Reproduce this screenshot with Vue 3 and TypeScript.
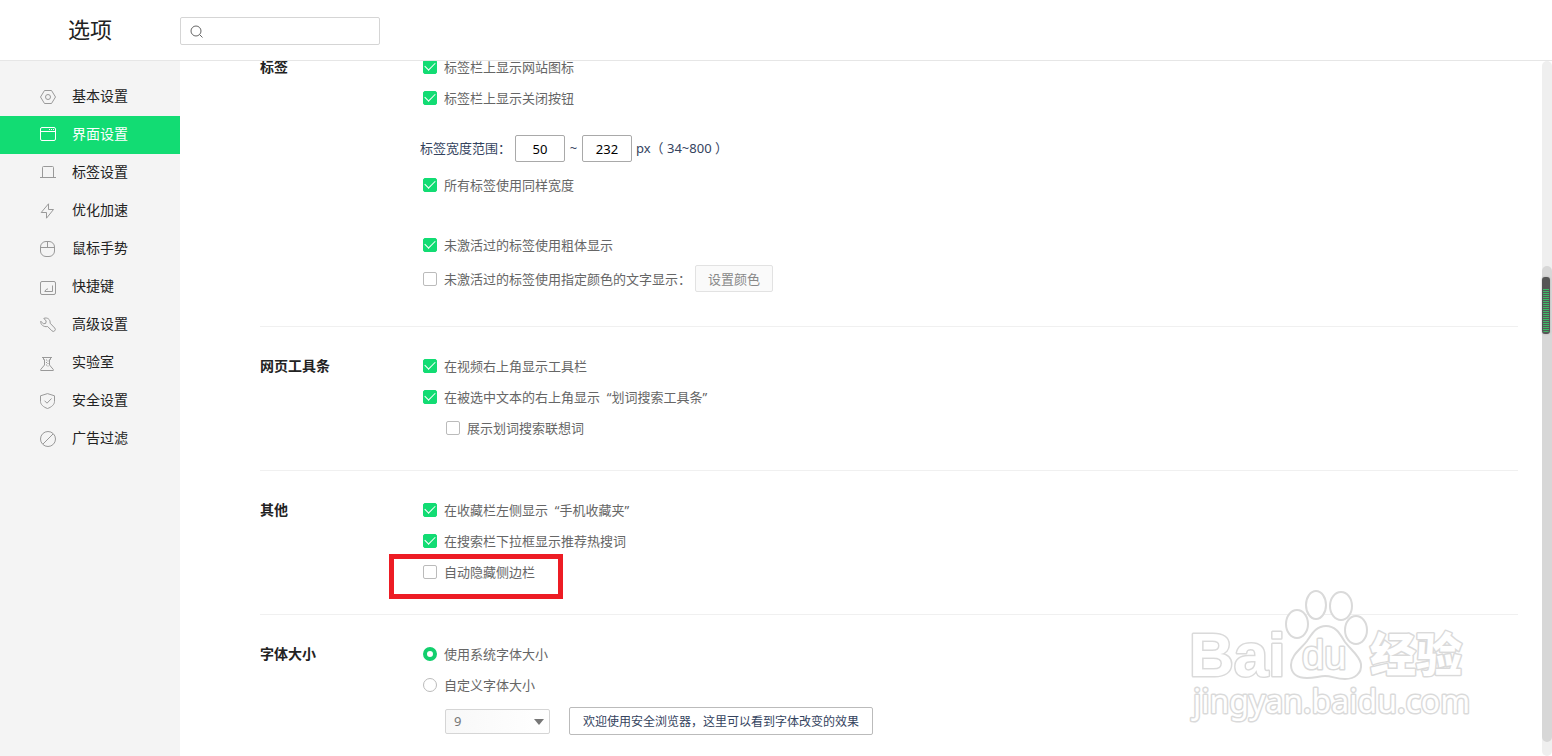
<script setup lang="ts">
import { ref } from 'vue'

interface NavItem {
  label: string
  paths: string[]
}

interface Option {
  label: string
  checked: boolean
  nested?: boolean
  marked?: boolean
}

const navItems: NavItem[] = [
  { label: '基本设置', paths: ['M4.5 1.5h7L15.5 8l-4 6.5h-7L.5 8z', 'M8 5.5a2.5 2.5 0 1 0 0 5a2.5 2.5 0 1 0 0-5z'] },
  { label: '界面设置', paths: ['M2 .5h12a1.5 1.5 0 0 1 1.5 1.5v10a1.5 1.5 0 0 1-1.5 1.5H2A1.5 1.5 0 0 1 .5 12V2A1.5 1.5 0 0 1 2 .5z', 'M.5 4.5h15', 'M9 2.5h1M11 2.5h1M13 2.5h1'] },
  { label: '标签设置', paths: ['M0 12.5h16', 'M2.5 12.5v-10a1 1 0 0 1 1-1h9a1 1 0 0 1 1 1v10'] },
  { label: '优化加速', paths: ['M8.5 .8L1.2 9.5h5.3v5.7L13.5 6.5H8.5z'] },
  { label: '鼠标手势', paths: ['M6 .5h3a5.5 5.5 0 0 1 5.5 5.5v4a5.5 5.5 0 0 1-5.5 5.5H6A5.5 5.5 0 0 1 .5 10V6A5.5 5.5 0 0 1 6 .5z', 'M.5 6.5h14', 'M7.5 .5v6'] },
  { label: '快捷键', paths: ['M2 2.5h12a1.5 1.5 0 0 1 1.5 1.5v10a1.5 1.5 0 0 1-1.5 1.5H2A1.5 1.5 0 0 1 .5 14V4A1.5 1.5 0 0 1 2 2.5z', 'M12.5 6.5v6H5', 'M8 10H6.8L4.5 12.5'] },
  { label: '高级设置', paths: ['M3.8 1.4C7.2 0 10.6 2.4 10.1 6.2l4.6 4.8a1.9 1.9 0 0 1-2.8 2.8L7.6 9.5C3.6 10.4 .2 7.400 .8 4.200l2.600 2.600 2.300-.4.500-2.400z'] },
  { label: '实验室', paths: ['M2 2.5h10', 'M3.5 2.5v2h1V10L.7 14.5v1h12.6v-1L9.5 10V4.5h1v-2', 'M6 5h1M6 7.5h1M6 10h1M7.5 6h1M7.5 8.5h1M7.5 11h1'] },
  { label: '安全设置', paths: ['M7.5 .6L14.5 2.8V8.5C14.5 11.5 11.5 14.2 7.5 15.5C3.5 14.2 .5 11.5 .5 8.5V2.8z', 'M4.5 7.7l2.5 2.5 4.5-4.7'] },
  { label: '广告过滤', paths: ['M8 .5a7.5 7.5 0 1 0 0 15a7.5 7.5 0 1 0 0-15z', 'M13 3L3 13'] },
]

const active = ref(1)
const search = ref('')
const minWidth = ref('50')
const maxWidth = ref('232')
const fontMode = ref('system')
const fontSize = ref('9')

const tabOptions = ref<Option[]>([
  { label: '标签栏上显示网站图标', checked: true },
  { label: '标签栏上显示关闭按钮', checked: true },
])
const sameWidth = ref(true)
const boldUnread = ref(true)
const colorUnread = ref(false)

const groups = ref<{ title: string; options: Option[] }[]>([
  {
    title: '网页工具条',
    options: [
      { label: '在视频右上角显示工具栏', checked: true },
      { label: '在被选中文本的右上角显示\u00a0\u00a0“划词搜索工具条”', checked: true },
      { label: '展示划词搜索联想词', checked: false, nested: true },
    ],
  },
  {
    title: '其他',
    options: [
      { label: '在收藏栏左侧显示\u00a0\u00a0“手机收藏夹”', checked: true },
      { label: '在搜索栏下拉框显示推荐热搜词', checked: true },
      { label: '自动隐藏侧边栏', checked: false, marked: true },
    ],
  },
])
</script>

<template>
  <div class="page">
    <header class="header">
      <h1>选项</h1>
      <label class="search">
        <svg width="13" height="13" viewBox="0 0 13 13" aria-hidden="true">
          <circle cx="6" cy="6" r="5" />
          <path d="M9.500 9.500l3 3" />
        </svg>
        <input v-model="search" type="text" aria-label="搜索" />
      </label>
    </header>

    <div class="body">
      <nav class="sidebar">
        <a
          v-for="(item, i) in navItems"
          :key="item.label"
          href="#"
          :class="{ active: i === active }"
          @click.prevent="active = i"
        >
          <svg width="16" height="16" viewBox="0 0 16 16" aria-hidden="true">
            <path v-for="d in item.paths" :key="d" :d="d" />
          </svg>
          <span>{{ item.label }}</span>
        </a>
      </nav>

      <main class="main">
        <div class="content">
          <section class="first">
            <h2>标签</h2>
            <div class="controls">
              <label v-for="o in tabOptions" :key="o.label" class="row">
                <input v-model="o.checked" type="checkbox" />{{ o.label }}
              </label>
              <div class="range">
                <label for="min-width">标签宽度范围：</label>
                <input id="min-width" v-model="minWidth" type="text" />
                <span class="tilde">~</span>
                <input v-model="maxWidth" type="text" aria-label="最大宽度" />
                <span class="unit">px（ 34~800 ）</span>
              </div>
              <label class="row"><input v-model="sameWidth" type="checkbox" />所有标签使用同样宽度</label>
              <label class="row spaced"><input v-model="boldUnread" type="checkbox" />未激活过的标签使用粗体显示</label>
              <div class="color-row">
                <label class="row"><input v-model="colorUnread" type="checkbox" />未激活过的标签使用指定颜色的文字显示：</label>
                <button type="button">设置颜色</button>
              </div>
            </div>
          </section>

          <section v-for="g in groups" :key="g.title">
            <h2>{{ g.title }}</h2>
            <div class="controls">
              <label v-for="o in g.options" :key="o.label" class="row" :class="{ nested: o.nested, marked: o.marked }">
                <input v-model="o.checked" type="checkbox" />{{ o.label }}
              </label>
            </div>
          </section>

          <section>
            <h2>字体大小</h2>
            <div class="controls">
              <label class="row"><input v-model="fontMode" type="radio" name="font" value="system" />使用系统字体大小</label>
              <label class="row"><input v-model="fontMode" type="radio" name="font" value="custom" />自定义字体大小</label>
              <div class="font-row">
                <div class="select">
                  <select v-model="fontSize" aria-label="字体大小" :disabled="fontMode === 'system'">
                    <option>9</option>
                    <option>10</option>
                    <option>12</option>
                  </select>
                </div>
                <div class="sample">欢迎使用安全浏览器，这里可以看到字体改变的效果</div>
              </div>
            </div>
          </section>
        </div>
      </main>

      <div class="scrollbar" aria-hidden="true">
        <div class="thumb"></div>
        <div class="meter"></div>
      </div>
    </div>

    <svg class="watermark" width="300" height="150" viewBox="0 0 300 150" aria-hidden="true">
      <ellipse cx="113" cy="42" rx="11" ry="14" />
      <ellipse cx="132" cy="23" rx="10" ry="14" />
      <ellipse cx="157" cy="24" rx="11" ry="14" />
      <ellipse cx="172" cy="48" rx="11" ry="14" />
      <path d="M142 44C132 44 128 52 123 59C117 67 107 73 107 83C107 92 114 96 123 96C131 96 135 94 141 94C148 94 152 97 161 97C171 97 178 91 177 82C176 74 167 68 161 60C156 52 152 44 142 44Z" />
      <text class="latin" x="5" y="94">Bai</text>
      <text class="du" x="118" y="87">du</text>
      <text class="cjk" x="186" y="89">经验</text>
      <text class="site" x="9" y="131">jingyan.baidu.com</text>
    </svg>
  </div>
</template>

<style>
html,
body,
#app {
  height: 100%;
}
body {
  margin: 0;
  overflow: hidden;
}
</style>

<style scoped>
*,
*::before,
*::after {
  box-sizing: border-box;
}
.page {
  display: flex;
  flex-direction: column;
  height: 100%;
  position: relative;
  background: #fff;
  color: #222;
  font-family: "Noto Sans", "Noto Sans CJK SC", sans-serif;
  font-size: 13px;
}
input,
button,
select {
  font: inherit;
  margin: 0;
}
.header {
  display: flex;
  align-items: center;
  flex: none;
  height: 61px;
  border-bottom: 1px solid #e6e6e6;
}
h1 {
  width: 180px;
  margin: 0;
  padding: 0 0 2px 68px;
  font-size: 22px;
  font-weight: 400;
  line-height: 30px;
}
.search {
  display: flex;
  align-items: center;
  width: 200px;
  height: 28px;
  margin-top: 2px;
  padding: 0 9px;
  gap: 6px;
  border: 1px solid #d5d5d5;
  border-radius: 2px;
}
.search svg {
  flex: none;
  fill: none;
  stroke: #666;
}
.search input {
  flex: 1;
  min-width: 0;
  border: 0;
  outline: 0;
  background: none;
}
.body {
  display: flex;
  flex: 1;
  min-height: 0;
}
.sidebar {
  flex: none;
  width: 180px;
  padding-top: 17px;
  background: #f4f4f4;
}
.sidebar a {
  display: flex;
  align-items: center;
  gap: 16px;
  height: 38px;
  padding-left: 40px;
  color: #222;
  font-size: 14px;
  text-decoration: none;
}
.sidebar span {
  align-self: flex-start;
  line-height: 36px;
}
.sidebar svg {
  fill: none;
  stroke: #999;
}
.sidebar .active {
  background: #12dc73;
  color: #fff;
}
.sidebar .active svg {
  stroke: #fff;
}
.main {
  flex: 1;
  min-width: 0;
  overflow: hidden;
  padding: 0 24px 0 80px;
}
.content {
  margin-top: -10px;
}
section {
  display: flex;
  padding: 23px 0 27px;
  border-top: 1px solid #f0f0f0;
}
.first {
  padding: 0 0 32px;
  border-top: 0;
}
h2 {
  flex: none;
  width: 160px;
  margin: 0;
  font-size: 14px;
  font-weight: 700;
  line-height: 31px;
}
.controls {
  flex: 1;
  min-width: 0;
}
.row {
  display: flex;
  align-items: center;
  width: fit-content;
  height: 31px;
  padding-left: 3px;
  color: #666;
}
.nested {
  margin-left: 23px;
}
.spaced {
  margin-top: 29px;
}
.marked {
  position: relative;
}
.marked::after {
  content: "";
  position: absolute;
  top: -2px;
  left: -31px;
  width: 174px;
  height: 45px;
  border: 5px solid #ed1c24;
}
input[type="checkbox"],
input[type="radio"] {
  appearance: none;
  display: grid;
  place-items: center;
  flex: none;
  width: 14px;
  height: 14px;
  margin-right: 7px;
  border: 1px solid #bbb;
  border-radius: 2px;
  background: #fff;
}
input[type="checkbox"]:checked {
  border-color: #12dc73;
  background: #12dc73;
}
input[type="checkbox"]:checked::before {
  content: "";
  width: 10px;
  height: 6px;
  margin-bottom: 3px;
  border: solid #fff;
  border-width: 0 0 1px 1px;
  transform: rotate(-45deg);
}
input[type="radio"] {
  border-radius: 50%;
}
input[type="radio"]:checked {
  border: 4px solid #12cf6d;
}
.range {
  display: flex;
  align-items: center;
  height: 31px;
  margin: 20px 0 5px;
  color: #34435e;
}
.range label {
  width: 95px;
}
.range label,
.range span {
  padding-bottom: 2px;
}
.range input {
  width: 50px;
  height: 27px;
  padding: 0;
  border: 1px solid #a9a9a9;
  border-radius: 2px;
  color: #000;
  text-align: center;
}
.tilde {
  width: 17px;
  text-align: center;
}
.unit {
  padding-left: 4px;
}
.color-row {
  display: flex;
  align-items: center;
  margin-top: 3px;
}
button {
  width: 78px;
  height: 27px;
  margin-left: 4px;
  padding: 0;
  border: 1px solid #e2e2e2;
  border-radius: 2px;
  background: #fafafa;
  color: #888;
}
.font-row {
  display: flex;
  align-items: center;
  gap: 19px;
  margin: 7px 0 0 25px;
}
.select {
  position: relative;
}
.select::after {
  content: "";
  position: absolute;
  top: 10px;
  right: 6px;
  border: 5px solid transparent;
  border-top: 6px solid #777;
  border-bottom: 0;
}
select {
  appearance: none;
  width: 105px;
  height: 25px;
  padding: 0 8px;
  border: 1px solid #d5d5d5;
  border-radius: 2px;
  background: linear-gradient(90deg, #f8f8f8, #fff);
  color: #777;
  opacity: 1;
}
.sample {
  height: 28px;
  padding: 1px 13px 0;
  border: 1px solid #bbb;
  border-radius: 2px;
  color: #34435e;
  font-size: 12px;
  line-height: 26px;
  white-space: nowrap;
}
.scrollbar {
  position: relative;
  flex: none;
  width: 10px;
  border-radius: 5px;
  background: #efefef;
}
.thumb {
  position: absolute;
  top: 29.5%;
  bottom: 2%;
  width: 10px;
  border-radius: 5px;
  background: #d7d7d7;
}
.meter {
  position: absolute;
  top: 31%;
  width: 8px;
  height: 57px;
  margin-top: 1px;
  border: solid #555;
  border-width: 12px 1px 2px;
  border-radius: 3px;
  background: repeating-linear-gradient(#3dba66 0 1px, #555 1px 2px);
  box-shadow: 0 0 2px #aaa;
}
.watermark {
  position: absolute;
  right: 68px;
  bottom: 24px;
  fill: #fff;
  stroke: #dadada;
  stroke-width: 2px;
  stroke-linejoin: round;
  pointer-events: none;
}
.watermark text {
  paint-order: stroke;
  stroke-width: 3px;
}
.latin {
  font: 700 62px "Liberation Sans", sans-serif;
}
.du {
  font: 400 40px "Liberation Sans", sans-serif;
}
.cjk {
  font: 900 46px "Noto Sans CJK SC", sans-serif;
}
.site {
  font: 400 32px "Noto Sans", sans-serif;
}
</style>
